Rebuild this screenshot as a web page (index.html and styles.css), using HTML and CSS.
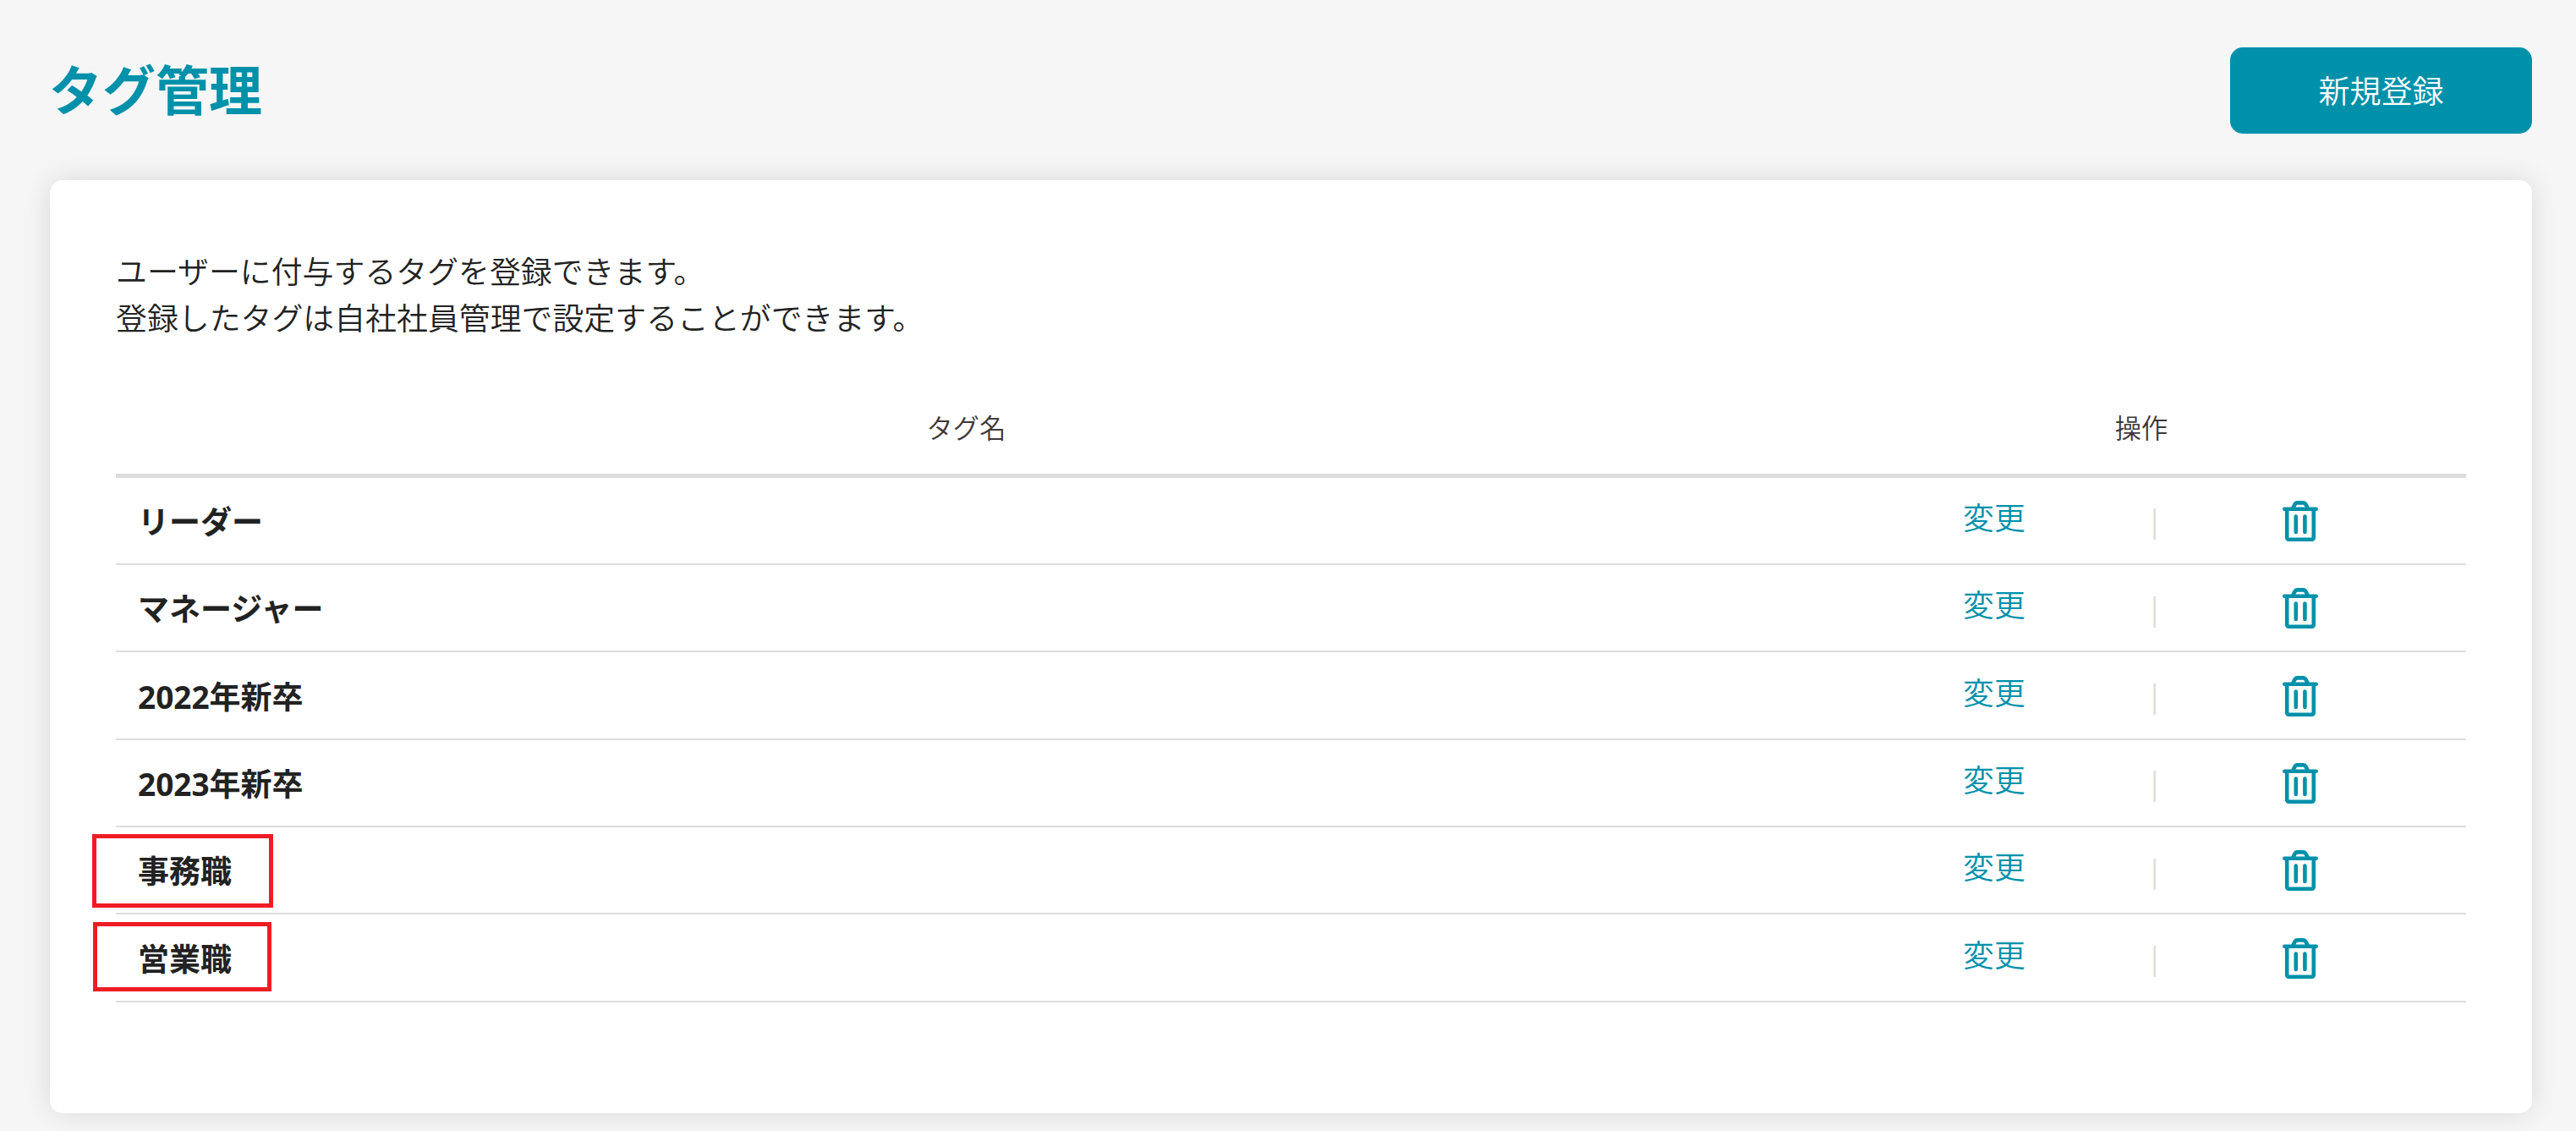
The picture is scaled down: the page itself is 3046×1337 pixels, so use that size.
FILE: index.html
```
<!DOCTYPE html>
<html lang="ja">
<head>
	<title>タグ管理</title>
	<meta charset="utf-8">
	<meta name="viewport" content="width=device-width, initial-scale=1">
	<link rel="stylesheet" href="styles.css">
</head>
<body>
	<svg class="symbols" xmlns="http://www.w3.org/2000/svg">
		<symbol id="trash" viewBox="0 0 42 48">
			<path d="M2.3 9.8H39.7M5.2 10V43.2Q5.2 45.7 7.8 45.7H34.2Q36.8 45.7 36.8 43.2V10M12 9L14.6 4.2Q15.6 2.4 17.4 2.4H24.6Q26.4 2.4 27.4 4.2L30 9M15.8 18.5V37M26.4 18.5V37" fill="none" stroke="currentColor" stroke-width="4.6" stroke-linecap="round"/>
		</symbol>
	</svg>

	<header class="header">
		<h1>タグ管理</h1>
		<button class="btn-new">新規登録</button>
	</header>

	<main class="card">
		<p class="lead">ユーザーに付与するタグを登録できます。<br>登録したタグは自社社員管理で設定することができます。</p>

		<div class="table">
			<div class="row head">
				<div>タグ名</div>
				<div>操作</div>
			</div>
			<div class="row">
				<div class="name">リーダー</div>
				<div class="actions"><a class="edit">変更</a><span class="sep"></span><svg class="trash"><use href="#trash"/></svg></div>
			</div>
			<div class="row">
				<div class="name">マネージャー</div>
				<div class="actions"><a class="edit">変更</a><span class="sep"></span><svg class="trash"><use href="#trash"/></svg></div>
			</div>
			<div class="row">
				<div class="name">2022年新卒</div>
				<div class="actions"><a class="edit">変更</a><span class="sep"></span><svg class="trash"><use href="#trash"/></svg></div>
			</div>
			<div class="row">
				<div class="name">2023年新卒</div>
				<div class="actions"><a class="edit">変更</a><span class="sep"></span><svg class="trash"><use href="#trash"/></svg></div>
			</div>
			<div class="row">
				<div class="name">事務職<span class="mark mark-office"></span></div>
				<div class="actions"><a class="edit">変更</a><span class="sep"></span><svg class="trash"><use href="#trash"/></svg></div>
			</div>
			<div class="row">
				<div class="name">営業職<span class="mark mark-sales"></span></div>
				<div class="actions"><a class="edit">変更</a><span class="sep"></span><svg class="trash"><use href="#trash"/></svg></div>
			</div>
		</div>
	</main>
</body>
</html>
```
FILE: styles.css
```
* {
	box-sizing: border-box;
}
body {
	font-family: "Open Sans", "Noto Sans CJK JP", sans-serif;
	font-size: 36.9px;
	font-weight: 350;
	background-color: #f6f6f6;
	color: #222;
	margin: 0;
	padding: 56px 52px 0 59px;
	height: 1337px;
	overflow: hidden;
}
.symbols {
	display: none;
}
.header {
	display: flex;
	justify-content: space-between;
	align-items: center;
	height: 102px;
	margin-bottom: 55px;
}
h1 {
	font-size: 63px;
	line-height: 1;
	color: #0091aa;
	margin: 0 0 3px -1px;
}
.btn-new {
	width: 357px;
	height: 102px;
	padding: 0 0 3px;
	font-family: inherit;
	font-size: 37px;
	font-weight: inherit;
	background-color: #0091aa;
	color: #fff;
	border: none;
	border-radius: 15px;
}
.card {
	height: 1103px;
	padding: 81px 78px 0;
	background-color: #fff;
	border-radius: 15px;
	box-shadow: 0 0 35px rgba(0, 0, 0, 0.12);
}
.lead {
	line-height: 55.2px;
	margin: 0 0 50.4px;
}
.row {
	display: grid;
	grid-template-columns: 2011px 768px;
	align-items: center;
	height: 103.33px;
	border-bottom: 2px solid #ddd;
}
.head {
	height: 110px;
	padding-bottom: 5px;
	border-bottom-width: 5px;
	font-size: 31.3px;
	text-align: center;
	color: #403838;
}
.name {
	position: relative;
	display: flex;
	align-items: center;
	height: 100%;
	padding: 0 0 1px 26px;
	font-size: 37px;
	font-weight: bold;
}
.actions {
	display: grid;
	grid-template-columns: 376px 3px 342px;
	align-items: center;
	justify-items: center;
	padding: 0 25px 0 22px;
}
.edit {
	color: #0091aa;
	padding-bottom: 11px;
}
.sep {
	width: 3px;
	height: 37px;
	margin-top: 9px;
	background-color: #ddd;
	border-left: 1px solid #f5edd8;
}
.trash {
	width: 42px;
	height: 48px;
	margin-top: 1px;
	color: #0091aa;
}
/* 赤枠 */
.mark {
	position: absolute;
	border: 5px solid #ef1c24;
}
.mark-office {
	left: -28px;
	top: 8px;
	width: 214px;
	height: 87px;
}
.mark-sales {
	left: -27px;
	top: 9px;
	width: 211px;
	height: 82px;
}
```
